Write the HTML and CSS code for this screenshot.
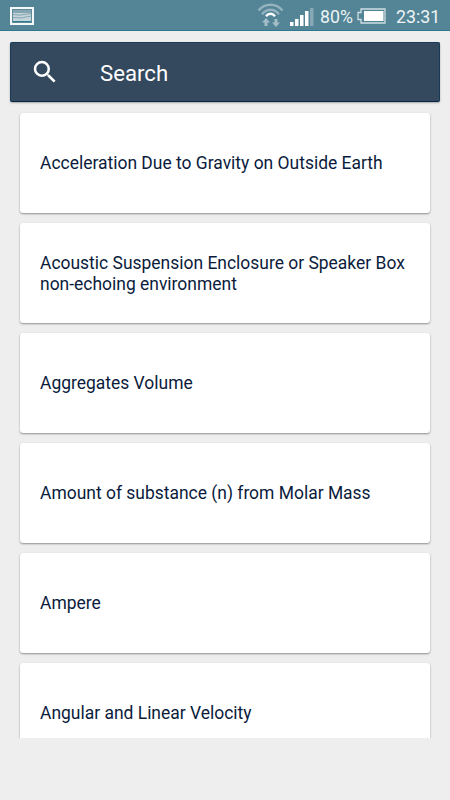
FILE: index.html
```html
<!DOCTYPE html>
<html lang="en">
<head>
<meta charset="utf-8">
<title>Search</title>
<link rel="stylesheet" href="styles.css">
</head>
<body>
<header class="status">
  <svg class="picture" width="24" height="18" viewBox="0 0 24 18">
    <rect x="1" y="1" width="22" height="16" fill="#5f8a99" stroke="#f5f8f9" stroke-width="2"/>
    <path d="M3 3h18v12H3z" fill="#c3d5db"/>
    <path d="M3 3h18v3H3z" fill="#85a5b1"/>
    <path d="M3 7.500l6 .7 5-.7 7-1M3 10.500l8 .5 10-2" fill="none" stroke="#7399a7" stroke-width=".8"/>
    <path d="M3 14.500h18" stroke="#2c7b90" stroke-width="1"/>
  </svg>
  <div class="indicators">
    <svg class="wifi" width="28" height="26" viewBox="0 0 28 26">
      <g fill="none" stroke="#94b3bf" stroke-width="2.400">
        <path d="M1.500 8.500C8 .8 19 .8 25.500 8.500"/>
        <path d="M5 12.200C10 6.200 17 6.200 22 12.200"/>
      </g>
      <path d="M9 14.300C11.500 10.900 15.500 10.900 18 14.300" fill="none" stroke="#fff" stroke-width="2.300"/>
      <path d="M9 16l4 4.500h-2.500V24h-3v-3.500H5zM17.500 17h3v3.500H23L19 25l-4-4.500h2.500z" fill="#a3bec8"/>
    </svg>
    <svg class="signal" width="24" height="20" viewBox="0 0 24 20">
      <path d="M0 15h3.500v4H0zM5 12h3.500v7H5zM10 8h3.500v11H10zM15 4h3.500v15H15z" fill="#fff"/>
      <path d="M20 1h3.500v18H20z" fill="#86a8b5"/>
    </svg>
    <span class="percent">80%</span>
    <svg class="battery" width="29" height="16" viewBox="0 0 29 16">
      <path d="M4 1h24v14H4v-3.500H1v-7h3z" fill="none" stroke="#d0dee3" stroke-width="1.300"/>
      <path d="M7 3h19.500v10H7z" fill="#fff"/>
    </svg>
    <span class="clock">23:31</span>
  </div>
</header>
<main>
  <div class="search">
    <svg width="30" height="30" viewBox="0 0 24 24"><path fill="#fff" d="M15.500 14h-.79l-.28-.27A6.470 6.470 0 0 0 16 9.500 6.500 6.500 0 1 0 9.500 16c1.610 0 3.090-.59 4.230-1.570l.27.28v.79l5 4.990L20.490 19l-4.990-5zm-6 0a4.500 4.500 0 1 1 0-9 4.500 4.500 0 0 1 0 9z"/></svg>
    <span>Search</span>
  </div>
  <div class="list">
    <div class="card"><span>Acceleration Due to Gravity on Outside Earth</span></div>
    <div class="card"><span>Acoustic Suspension Enclosure or Speaker Box non-echoing environment</span></div>
    <div class="card"><span>Aggregates Volume</span></div>
    <div class="card"><span>Amount of substance (n) from Molar Mass</span></div>
    <div class="card"><span>Ampere</span></div>
    <div class="card"><span>Angular and Linear Velocity</span></div>
  </div>
</main>
</body>
</html>
```
FILE: styles.css
```css
* { box-sizing: border-box; }
body {
  margin: 0;
  height: 800px;
  overflow: hidden;
  background: #eee;
  font-family: Roboto, sans-serif;
}
svg { display: block; flex: none; }
.status {
  height: 31px;
  padding: 0 11px 0 10px;
  display: flex;
  align-items: center;
  justify-content: space-between;
  background: #538596;
  border-bottom: 1px solid #2d788e;
  color: #eef3f5;
}
.picture { margin-top: 2px; }
.indicators { display: flex; align-items: center; height: 30px; }
.wifi { margin: 0 5px 0 0; }
.signal { margin: 4px 6px 0 0; }
.percent { width: 37px; font-size: 17.700px; line-height: 30px; padding-top: 3px; }
.battery { margin-top: 1px; }
.clock { width: 43px; margin-left: 10px; font-size: 17.800px; line-height: 30px; padding-top: 3px; }
.search {
  display: flex;
  align-items: center;
  height: 60px;
  margin: 11px 10px 0;
  padding-left: 18.500px;
  gap: 40.500px;
  border: 1px solid #183b58;
  border-bottom-color: #082642;
  border-radius: 2px;
  background: #34495e;
  box-shadow: 0 1px 2px rgba(0, 0, 0, .3);
  color: #fff;
  font-size: 22.200px;
}
.search span { padding-top: 2px; }
.list {
  height: 635.500px;
  padding: 10.500px 20px 0;
  overflow: hidden;
}
.card {
  display: flex;
  align-items: center;
  height: 100px;
  margin-bottom: 10px;
  padding: 2px 20px 0;
  border-radius: 3px;
  background: #fff;
  box-shadow: 0 1px 2px rgba(0, 0, 0, .4);
  color: #0a1b3c;
  font-size: 17.470px;
  line-height: 20.500px;
}
```
